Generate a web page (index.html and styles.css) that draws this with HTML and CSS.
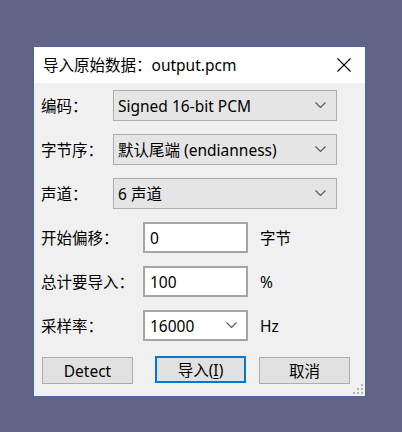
FILE: index.html
```html
<!DOCTYPE html>
<html lang="zh-CN">
<head>
<meta charset="utf-8">
<title>导入原始数据</title>
<link rel="stylesheet" href="styles.css">
</head>
<body>
<div class="dialog">
  <div class="titlebar">
    <span class="title">导入原始数据：output.pcm</span>
    <svg class="close" width="14" height="14" viewBox="0 0 14 14"><path d="M0.5 0.5 L13.5 13.5 M13.5 0.5 L0.5 13.5" stroke="#000" stroke-width="1.1" fill="none"/></svg>
  </div>
  <div class="content">
    <div class="row wide">
      <span class="label">编码：</span>
      <div class="combo"><span>Signed 16-bit PCM</span><svg class="chev" width="11" height="7" viewBox="0 0 11 7"><path d="M0.5 0.5 L5.5 5.5 L10.5 0.5" stroke="#5a5a5a" stroke-width="1.2" fill="none"/></svg></div>
    </div>
    <div class="row wide">
      <span class="label">字节序：</span>
      <div class="combo"><span>默认尾端 (endianness)</span><svg class="chev" width="11" height="7" viewBox="0 0 11 7"><path d="M0.5 0.5 L5.5 5.5 L10.5 0.5" stroke="#5a5a5a" stroke-width="1.2" fill="none"/></svg></div>
    </div>
    <div class="row wide">
      <span class="label">声道：</span>
      <div class="combo"><span>6 声道</span><svg class="chev" width="11" height="7" viewBox="0 0 11 7"><path d="M0.5 0.5 L5.5 5.5 L10.5 0.5" stroke="#5a5a5a" stroke-width="1.2" fill="none"/></svg></div>
    </div>
    <div class="row narrow">
      <span class="label">开始偏移：</span>
      <div class="input"><span>0</span></div>
      <span class="unit">字节</span>
    </div>
    <div class="row narrow">
      <span class="label">总计要导入：</span>
      <div class="input"><span>100</span></div>
      <span class="unit">%</span>
    </div>
    <div class="row narrow">
      <span class="label">采样率：</span>
      <div class="input editcombo"><span>16000</span><svg class="chev" width="11" height="7" viewBox="0 0 11 7"><path d="M0.5 0.5 L5.5 5.5 L10.5 0.5" stroke="#5a5a5a" stroke-width="1.2" fill="none"/></svg></div>
      <span class="unit">Hz</span>
    </div>
    <div class="buttons">
      <div class="btn detect">Detect</div>
      <div class="btn default">导入(<u>I</u>)</div>
      <div class="btn cancel">取消</div>
    </div>
    <svg class="grip" width="10" height="10" viewBox="0 0 10 10">
      <rect x="8" y="0" width="2" height="2" fill="#b4b4b4"/>
      <rect x="4" y="4" width="2" height="2" fill="#b4b4b4"/>
      <rect x="8" y="4" width="2" height="2" fill="#b4b4b4"/>
      <rect x="0" y="8" width="2" height="2" fill="#b4b4b4"/>
      <rect x="4" y="8" width="2" height="2" fill="#b4b4b4"/>
      <rect x="8" y="8" width="2" height="2" fill="#b4b4b4"/>
    </svg>
  </div>
</div>
</body>
</html>
```
FILE: styles.css
```css
html, body {
  margin: 0;
  padding: 0;
}
body {
  background: #616387;
  width: 402px;
  height: 432px;
  padding: 46px 0 0 33px;
  box-sizing: border-box;
  font-family: "Noto Sans", "Noto Sans CJK SC", sans-serif;
  font-size: 15.5px;
  color: #000;
}
.dialog {
  width: 333px;
  border: 1px solid #47689c;
  box-sizing: border-box;
  background: #f0f0f0;
}
.titlebar {
  height: 36px;
  background: #fff;
  display: flex;
  align-items: center;
  justify-content: space-between;
  padding: 0 14px 0 9px;
}
.title {
  font-size: 15.5px;
  line-height: 20px;
}
.close {
  display: block;
}
.content {
  position: relative;
  padding: 7px 7px 12px 7px;
  display: flex;
  flex-direction: column;
  gap: 13px;
}
.row {
  display: flex;
  align-items: center;
  height: 31px;
}
.label {
  flex: none;
}
.wide .label {
  width: 72px;
}
.narrow .label {
  width: 102px;
}
.combo {
  width: 224px;
  height: 31px;
  box-sizing: border-box;
  border: 1px solid #adadad;
  background: #e5e5e5;
  display: flex;
  align-items: center;
  justify-content: space-between;
  padding: 0 10px 0 4px;
}
.chev {
  display: block;
}
.input {
  width: 105px;
  height: 31px;
  box-sizing: border-box;
  border: 2px solid #a5a5a5;
  background: #fff;
  display: flex;
  align-items: center;
  padding: 0 4px 0 5px;
}
.editcombo {
  justify-content: space-between;
  padding-right: 9px;
}
.unit {
  margin-left: 12px;
}
.buttons {
  display: flex;
  margin-top: 3px;
  padding-left: 1px;
}
.btn {
  width: 91px;
  height: 27px;
  box-sizing: border-box;
  border: 1px solid #adadad;
  background: #e1e1e1;
  display: flex;
  align-items: center;
  justify-content: center;
}
.btn u {
  text-decoration: underline;
  text-underline-offset: 2px;
}
.default {
  border: 2px solid #0078d7;
  margin-left: 22px;
  margin-top: -1px;
}
.cancel {
  margin-left: 13px;
}
.grip {
  position: absolute;
  right: 2px;
  bottom: 2px;
  display: block;
}
```
